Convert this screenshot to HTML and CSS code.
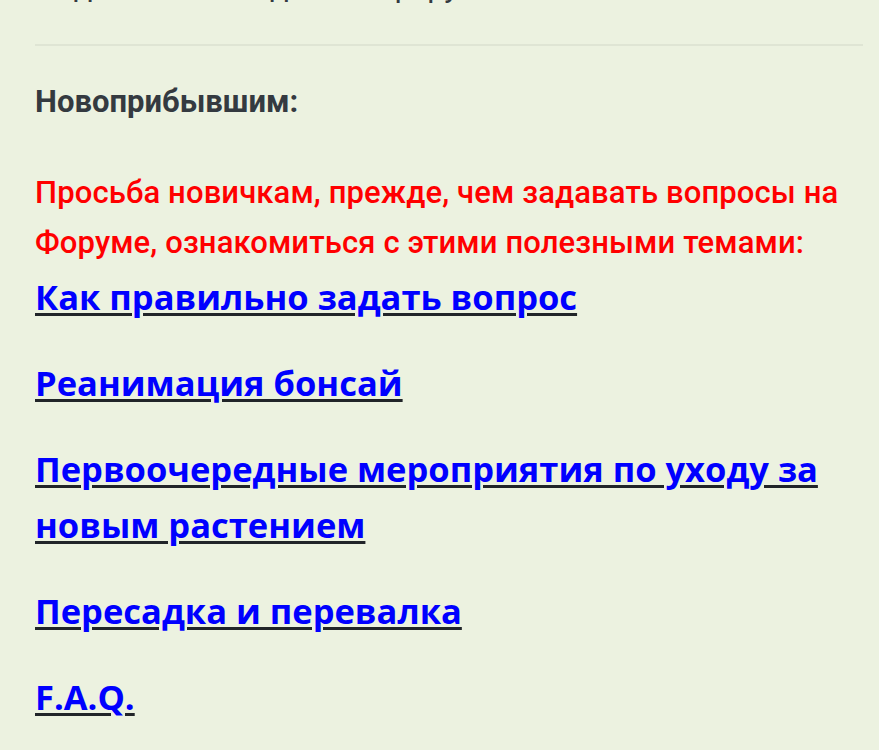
FILE: index.html
```html
<!DOCTYPE html>
<html lang="ru">
<head>
<meta charset="utf-8">
<title>Новоприбывшим</title>
<link rel="stylesheet" href="styles.css">
</head>
<body>
<main class="page">
  <p class="cut">Подключение к доскам форума.</p>
  <hr class="rule">
  <h3 class="title">Новоприбывшим:</h3>
  <p class="notice">Просьба новичкам, прежде, чем задавать вопросы на Форуме, ознакомиться с этими полезными темами:</p>
  <p class="topic"><a href="#">Как правильно задать вопрос</a></p>
  <p class="topic"><a href="#">Реанимация бонсай</a></p>
  <p class="topic"><a href="#">Первоочередные мероприятия по уходу за новым растением</a></p>
  <p class="topic"><a href="#">Пересадка и перевалка</a></p>
  <p class="topic"><a href="#">F.A.Q.</a></p>
</main>
</body>
</html>
```

FILE: styles.css
```css
html, body {
  margin: 0;
  padding: 0;
  background: #ecf2e0;
}

body {
  font-family: Roboto, "Noto Sans", "Liberation Sans", sans-serif;
  color: #343a40;
  overflow: hidden;
}

.page {
  display: flex;
  flex-direction: column;
  padding: 0 16px 0 35px;
}

.cut {
  margin: -38px 0 0 0;
  font-size: 31px;
  line-height: 50px;
  color: #343a40;
}

.rule {
  margin: 32px 0 0 0;
  border: 0;
  height: 2px;
  background: #dfe5d4;
}

.title {
  margin: 31px 0 0 0;
  font-size: 31px;
  line-height: 50px;
  font-weight: 700;
  color: #343a40;
}

.notice {
  margin: 41px 0 0 0;
  font-size: 31px;
  line-height: 50px;
  font-weight: 500;
  letter-spacing: 0.12px;
  color: #ff0000;
}

.topic {
  margin: 30px 0 0 0;
  font-family: "Open Sans", Roboto, sans-serif;
  font-size: 34.5px;
  line-height: 56px;
  font-weight: 700;
}

.notice + .topic {
  margin-top: 1px;
}

.topic a {
  color: #0000ff;
  text-decoration: underline;
  text-decoration-color: #212529;
  text-decoration-thickness: 3px;
  text-underline-offset: 3px;
}
```
